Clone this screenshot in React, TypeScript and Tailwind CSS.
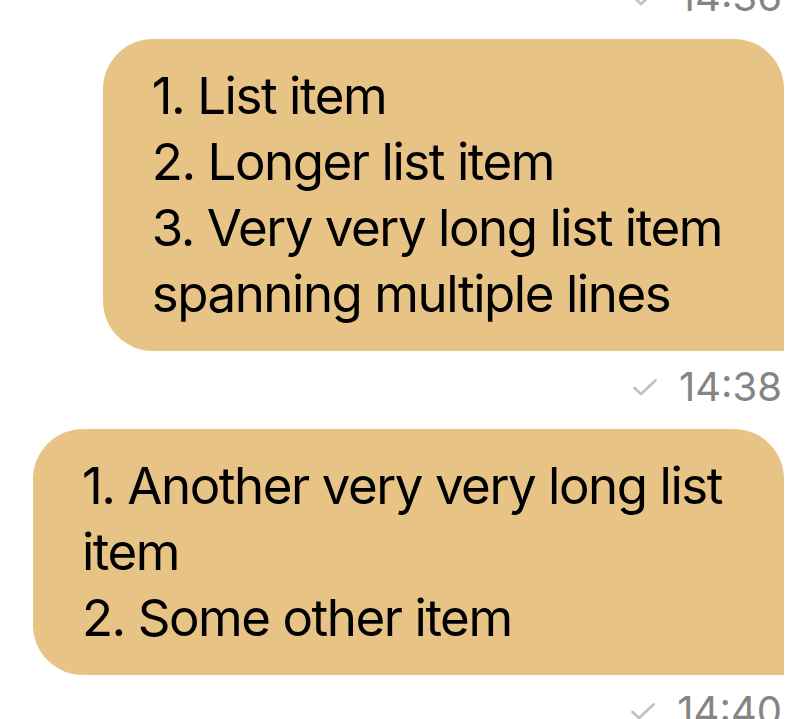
const messages = [
  {
    time: "14:38",
    lines: [
      "1. List item",
      "2. Longer list item",
      "3. Very very long list item",
      "spanning multiple lines",
    ],
  },
  {
    time: "14:40",
    lines: ["1. Another very very long list", "item", "2. Some other item"],
  },
];

function Timestamp({ time }: { time: string }) {
  return (
    <div className="flex h-[78px] items-start justify-end pt-[12px] pr-[2px]">
      <div className="flex items-center gap-[22px] leading-[48px]">
        {/* delivered tick */}
        <svg width="24" height="17" viewBox="0 0 24 17" fill="none">
          <path
            d="M1.5 9 L8 15 L22.5 1.5"
            stroke="#c2c2c4"
            strokeWidth="2.8"
            strokeLinecap="round"
            strokeLinejoin="round"
          />
        </svg>
        <span className="text-[40px] text-[#858585]">{time}</span>
      </div>
    </div>
  );
}

export default function App() {
  return (
    <div
      className="h-[719px] w-[808px] overflow-hidden bg-white"
      style={{ fontFamily: "Inter, 'Noto Sans', sans-serif" }}
    >
      <div className="-mt-[39px] flex flex-col pr-[24px]">
        <Timestamp time="14:36" />
        {messages.map((m) => (
          <div key={m.time} className="flex flex-col">
            <div className="self-end rounded-[50px] rounded-br-none bg-[#e8c386] py-[24px] pr-[62px] pl-[49px] text-[51px] leading-[66px] tracking-[-1.45px] text-black">
              {m.lines.map((l) => (
                <div key={l} className="whitespace-nowrap">
                  {l}
                </div>
              ))}
            </div>
            <Timestamp time={m.time} />
          </div>
        ))}
      </div>
    </div>
  );
}
